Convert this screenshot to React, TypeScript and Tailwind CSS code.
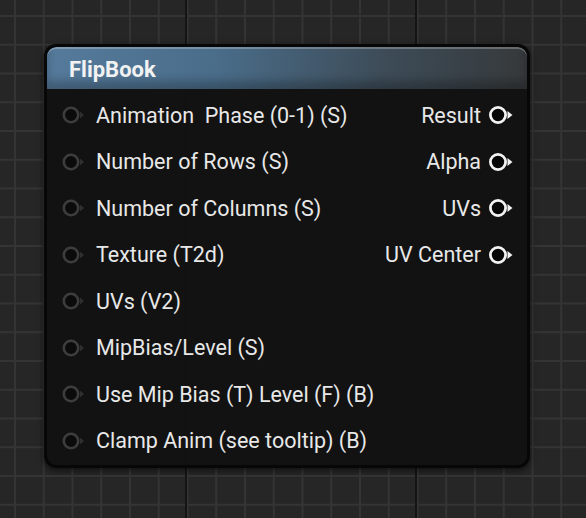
import React from "react";

const inputs = [
  "Animation\u00a0\u00a0Phase (0-1) (S)",
  "Number of Rows (S)",
  "Number of Columns (S)",
  "Texture (T2d)",
  "UVs (V2)",
  "MipBias/Level (S)",
  "Use Mip Bias (T) Level (F) (B)",
  "Clamp Anim (see tooltip) (B)",
];

const outputs = ["Result", "Alpha", "UVs", "UV Center"];

const InPin = () => (
  <svg width="24" height="18" viewBox="0 0 24 18" className="shrink-0">
    <circle cx="10" cy="9" r="7.2" fill="#0b0b0b" stroke="#3d3d3d" strokeWidth="2.6" />
    <path d="M19 5.5 L23 9 L19 12.5 Z" fill="#2f2f2f" />
  </svg>
);

const OutPin = () => (
  <svg width="26" height="20" viewBox="0 0 26 20" className="shrink-0">
    <circle cx="10" cy="10" r="7.6" fill="#050505" stroke="#f2f2f2" strokeWidth="2.8" />
    <path d="M19.5 6 L24.5 10 L19.5 14 Z" fill="#f2f2f2" />
  </svg>
);

export default function App() {
  return (
    <div
      className="w-[586px] h-[518px] overflow-hidden bg-[#262626] pt-[44px] pl-[44px] bg-[linear-gradient(to_right,#141414_2px,transparent_2px),linear-gradient(to_right,#343434_2px,transparent_2px),linear-gradient(to_bottom,#343434_2px,transparent_2px)] bg-[length:230px_230px,28.75px_28.75px,28.75px_28.75px] bg-[position:185px_0,14px_0,0_15px]"
      style={{ fontFamily: "Roboto, 'Liberation Sans', sans-serif" }}
    >
      <div className="w-[486px] h-[424px] rounded-[12px] border-[3px] border-[#070707] bg-[#111111]/95 shadow-[0_2px_6px_rgba(0,0,0,0.6)] flex flex-col overflow-hidden">
        <div className="h-[42px] shrink-0 rounded-t-[9px] bg-[linear-gradient(to_right,#557a9b_0%,#4a6d8a_35%,#3d4c58_70%,#36393b_100%)] shadow-[inset_0_2px_0_rgba(255,255,255,0.25),inset_0_-8px_10px_rgba(0,0,0,0.25)] flex items-center pl-[22px] pt-[3px]">
          <span className="text-[22px] font-bold text-[#f2f2f2] leading-none">FlipBook</span>
        </div>
        <div className="flex pt-[3px]">
          <div className="flex flex-col flex-1">
            {inputs.map((label, i) => (
              <div key={`in_${i}`} className="h-[46.5px] flex items-center pl-[14px] gap-[11px]">
                <InPin />
                <span className="text-[21.5px] text-[#e8e8e8] leading-none whitespace-nowrap">{label}</span>
              </div>
            ))}
          </div>
          <div className="flex flex-col">
            {outputs.map((label, i) => (
              <div key={`out_${i}`} className="h-[46.5px] flex items-center justify-end pr-[13px] gap-[7px]">
                <span className="text-[21.5px] text-[#e8e8e8] leading-none whitespace-nowrap">{label}</span>
                <OutPin />
              </div>
            ))}
          </div>
        </div>
      </div>
    </div>
  );
}
